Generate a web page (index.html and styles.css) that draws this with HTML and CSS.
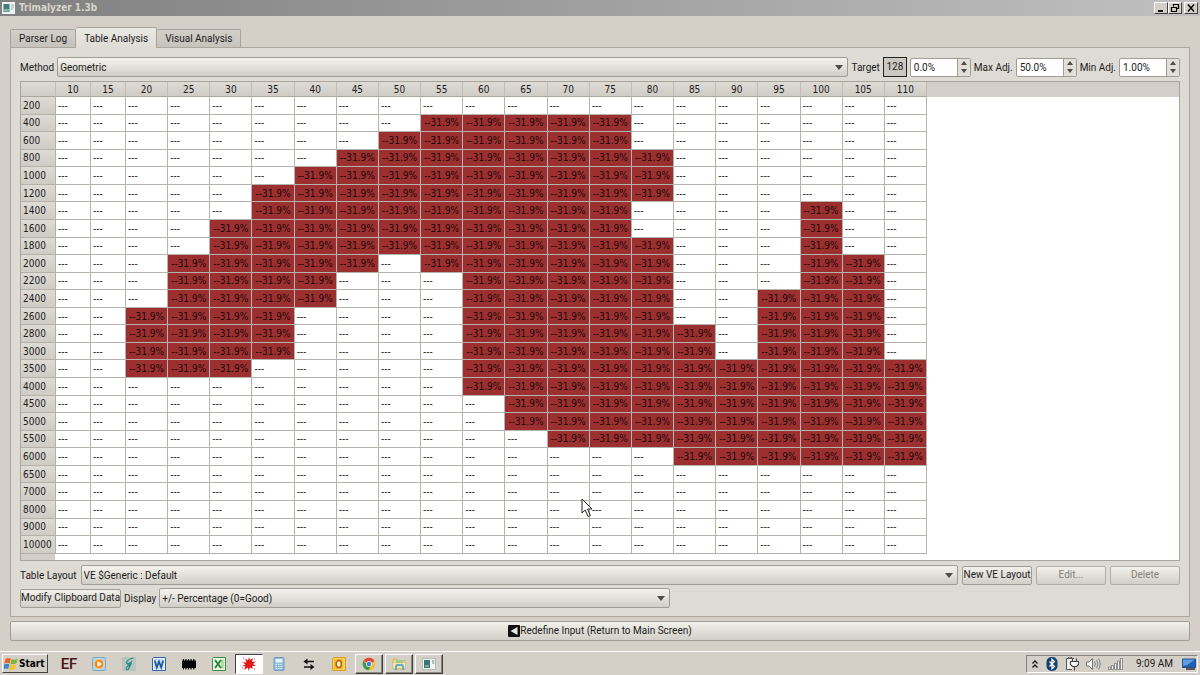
FILE: index.html
```html
<!DOCTYPE html>
<html lang="en">
<head>
<meta charset="utf-8">
<title>Trimalyzer 1.3b</title>
<link rel="stylesheet" href="styles.css">
</head>
<body>
<div class="screen">
  <header class="titlebar">
    <svg class="app-icon" viewBox="0 0 13 12" width="13" height="12"><rect width="13" height="12" fill="#eef2f0"/><rect x="1.500" y="2" width="6" height="8" fill="#3f7f7a"/><rect x="2" y="7" width="5" height="2.500" fill="#8db8a6"/><path d="M9 3h3M9 5h3M9 7h2" stroke="#9ab0a8"/></svg>
    <h1 class="title">Trimalyzer 1.3b</h1>
    <div class="window-buttons">
      <button class="win-btn" aria-label="Minimize"><svg viewBox="0 0 12 10" width="12" height="10"><path d="M3 8h5" stroke="#000" stroke-width="1.800"/></svg></button>
      <button class="win-btn" aria-label="Restore"><svg viewBox="0 0 12 10" width="12" height="10"><path d="M4.500 3.500V1.500h5v4H8M4.500 1.500h5M2.500 4.500h5v4h-5z" fill="none" stroke="#000" stroke-width="1.200"/></svg></button>
      <button class="win-btn close" aria-label="Close"><svg viewBox="0 0 12 10" width="12" height="10"><path d="M3 1.500l6 7M9 1.500l-6 7" stroke="#000" stroke-width="1.500"/></svg></button>
    </div>
  </header>

  <main class="content">
    <div class="tabs" role="tablist">
      <button class="tab" role="tab" aria-selected="false">Parser Log</button>
      <button class="tab active" role="tab" aria-selected="true">Table Analysis</button>
      <button class="tab" role="tab" aria-selected="false">Visual Analysis</button>
    </div>

    <section class="pane" role="tabpanel" aria-label="Table Analysis">
      <div class="row tight">
        <label for="method">Method</label>
        <div class="combo grow">
          <select id="method"><option>Geometric</option></select>
          <svg class="arrow" viewBox="0 0 8 5" width="8" height="5"><path d="M0 0h8L4 5z"/></svg>
        </div>
        <label for="target">Target</label>
        <button class="target-box">128</button>
        <div class="spin">
          <input id="target" type="text" value="0.0%">
          <div class="steps">
            <button class="step" aria-label="Increase target"><svg viewBox="0 0 6 4" width="6" height="4"><path d="M0 4h6L3 0z"/></svg></button>
            <button class="step" aria-label="Decrease target"><svg viewBox="0 0 6 4" width="6" height="4"><path d="M0 0h6L3 4z"/></svg></button>
          </div>
        </div>
        <label for="maxadj">Max Adj.</label>
        <div class="spin">
          <input id="maxadj" type="text" value="50.0%">
          <div class="steps">
            <button class="step" aria-label="Increase maximum"><svg viewBox="0 0 6 4" width="6" height="4"><path d="M0 4h6L3 0z"/></svg></button>
            <button class="step" aria-label="Decrease maximum"><svg viewBox="0 0 6 4" width="6" height="4"><path d="M0 0h6L3 4z"/></svg></button>
          </div>
        </div>
        <label for="minadj">Min Adj.</label>
        <div class="spin">
          <input id="minadj" type="text" value="1.00%">
          <div class="steps">
            <button class="step" aria-label="Increase minimum"><svg viewBox="0 0 6 4" width="6" height="4"><path d="M0 4h6L3 0z"/></svg></button>
            <button class="step" aria-label="Decrease minimum"><svg viewBox="0 0 6 4" width="6" height="4"><path d="M0 0h6L3 4z"/></svg></button>
          </div>
        </div>
      </div>

      <div class="grid-view">
        <table class="grid">
          <colgroup><col class="narrow"><col class="narrow"><col class="narrow"></colgroup>
          <thead><tr id="grid-head"></tr></thead>
          <tbody id="grid-body"></tbody>
        </table>
      </div>

      <div class="row">
        <label for="layout">Table Layout</label>
        <div class="combo grow">
          <select id="layout"><option>VE $Generic : Default</option></select>
          <svg class="arrow" viewBox="0 0 8 5" width="8" height="5"><path d="M0 0h8L4 5z"/></svg>
        </div>
        <button class="btn">New VE Layout</button>
        <button class="btn" disabled>Edit...</button>
        <button class="btn" disabled>Delete</button>
      </div>
      <div class="row tight">
        <button class="btn wide">Modify Clipboard Data</button>
        <label for="display">Display</label>
        <div class="combo display">
          <select id="display"><option>+/- Percentage (0=Good)</option></select>
          <svg class="arrow" viewBox="0 0 8 5" width="8" height="5"><path d="M0 0h8L4 5z"/></svg>
        </div>
      </div>
    </section>

    <button class="btn redefine">
      <svg viewBox="0 0 12 12" width="12" height="12"><rect width="12" height="12" rx="1" fill="#111"/><path d="M9.500 2v8L2.500 6z" fill="#e8e8e4"/></svg>
      Redefine Input (Return to Main Screen)
    </button>
  </main>

  <footer class="taskbar">
    <button class="start">
      <svg viewBox="0 0 14 14" width="14" height="14"><path d="M1.500 2C3.500.5 5 1 6.700 1.800L5.600 6.400C4 5.600 2.500 5.600.3 6.600z" fill="#e8622a"/><path d="M7.500 2.100C9.500 3 11.500 2.800 13.800 1.700L12.500 6.300C10.500 7.300 8.500 7.400 6.400 6.600z" fill="#7db83a"/><path d="M0 7.500C2.300 6.500 3.800 6.600 5.400 7.300L4.200 12C2.800 11.300 1.200 11.300 0 12z" fill="#3f86d0"/><path d="M6.200 7.600C8.200 8.400 10.200 8.300 12.200 7.400L11 12C9 13.100 7 13 4.900 12.300z" fill="#f4c22c"/></svg>
      Start
    </button>
    <nav class="launch" aria-label="Applications">
      <button class="task ef" aria-label="EF">EF</button>
      <button class="task" aria-label="Media Player"><svg viewBox="0 0 14 14"><rect x=".5" y=".5" width="13" height="13" rx="1" fill="#a9d0ea" stroke="#78aacb"/><circle cx="7" cy="7" r="5" fill="#f18a1f" stroke="#fff0d0" stroke-width=".7"/><path d="M5.500 4.200v5.600L10 7z" fill="#fff"/></svg></button>
      <button class="task" aria-label="Feather"><svg viewBox="0 0 14 14"><rect width="14" height="14" fill="#b8c4c0"/><path d="M11.500 1C7 2 4.500 4 4.500 6c1.500 1 4 .5 5.500-2M5 8c2 0 3.500-.5 4.500-2L6.500 12C5 13.500 3.500 12.500 4.500 10.500c1-1.500 3-1.500 4-2" fill="none" stroke="#258c86" stroke-width="1.200"/></svg></button>
      <button class="task" aria-label="Word"><svg viewBox="0 0 14 14"><path d="M1.500.5H13.500v13H.5v-12z" fill="#e6f0fb" stroke="#2d66ad"/><path d="M2 2h9v10H2z" fill="#cadff5"/><path d="M2.800 3.500L4.800 10.500 7 4.500 9.200 10.500 11.200 3.500" fill="none" stroke="#1d559f" stroke-width="1.700"/></svg></button>
      <button class="task" aria-label="Chip"><svg viewBox="0 0 14 14"><rect y="3.500" width="14" height="7.500" fill="#050505"/><path d="M1.500 2v10.500M4 2v10.500M6.500 2v10.500M9 2v10.500M11.800 2v10.500" stroke="#050505" stroke-width="1.200"/></svg></button>
      <button class="task" aria-label="Excel"><svg viewBox="0 0 14 14"><path d="M1.500.5H13.500v13H.5v-12z" fill="#eaf6e6" stroke="#3c8d3f"/><path d="M9 2.500h3v9H9" fill="#b7dbac"/><path d="M3 3l6 8M9 3l-6 8" stroke="#2d8436" stroke-width="2"/></svg></button>
      <button class="task pressed" aria-label="Trimalyzer"><svg viewBox="0 0 14 14"><path d="M7 0l1 3 3-2-1 4 4-.5-3 2.500 3 2-4 0 1 3-3-1.500L6.500 14 6 10.500 2 13l1.500-3.500L0 9l3.500-1.500L.5 5l4 .5L3 1.500l3 2z" fill="#e31515"/><path d="M1 1h1M0 11h1M12 12h1M12 2h1" stroke="#e33"/></svg></button>
      <button class="task" aria-label="Calculator"><svg viewBox="0 0 14 14"><rect x="2" y=".5" width="10" height="13" rx="1" fill="#8fbcdc" stroke="#6f9dbf"/><rect x="3.500" y="2" width="7" height="3.500" fill="#e5f5fc"/><path d="M3.500 7.500h7M3.500 9.500h7M3.500 11.500h7" stroke="#dcecf6" stroke-dasharray="1.500 1"/></svg></button>
      <button class="task" aria-label="Transfer"><svg viewBox="0 0 14 14"><path d="M3 4.500h9M2 10h9" stroke="#111" stroke-width="1.400"/><path d="M5.500 1.500v6L1.500 4.500zM8.500 7v6L12.500 10z" fill="#111"/></svg></button>
      <button class="task" aria-label="Outlook"><svg viewBox="0 0 14 14"><path d="M1.500.5H13.500v13H.5v-12z" fill="#f8d36a" stroke="#d99b20"/><path d="M2 2h9v10H2z" fill="#f3b936"/><ellipse cx="6.800" cy="7" rx="2.600" ry="3.400" fill="#fff2c4" stroke="#a96708" stroke-width="1.500"/></svg></button>
      <button class="task raised" aria-label="Chrome"><svg viewBox="0 0 14 14"><circle cx="7" cy="7" r="6.300" fill="#f0c22c"/><path d="M7 7L1.500 3.800A6.300 6.300 0 0 1 12.500 4z" fill="#dc4537"/><path d="M1.500 3.800A6.300 6.300 0 0 0 6.500 13.300L9 8.500 5 8z" fill="#3d9c50"/><circle cx="7" cy="7" r="2.900" fill="#eee"/><circle cx="7" cy="7" r="2.200" fill="#3e7fe0"/></svg></button>
      <button class="task raised" aria-label="Explorer"><svg viewBox="0 0 14 14"><path d="M1 2h4l1 1.500h7V12H1z" fill="#ecd680" stroke="#c0aa55" stroke-width=".7"/><path d="M4 3h7v3H4z" fill="#9ccf8e"/><path d="M1 6h12v5H1z" fill="#f5e7a0"/><path d="M4 13V9.500q0-1.500 1.500-1.500h4Q11 8 11 9.500V13" fill="none" stroke="#5da6d6" stroke-width="1.800"/></svg></button>
      <button class="task raised" aria-label="Trimalyzer window"><svg viewBox="0 0 14 14"><rect x=".5" y="1.500" width="13" height="11" fill="#f2f5f3" stroke="#b4bcb8"/><rect x="2" y="3" width="6" height="8" fill="#3b7472"/><rect x="3" y="8" width="4" height="2" fill="#82ad9d"/><path d="M10 4h2.500M10 6h2.500" stroke="#78938b"/></svg></button>
    </nav>
    <div class="tray">
      <svg viewBox="0 0 8 12" width="8" height="12"><path d="M1.500 5.500L4 3l2.500 2.500M1.500 9.500L4 7l2.500 2.500" fill="none" stroke="#111" stroke-width="1.300"/></svg>
      <svg viewBox="0 0 12 14" width="12" height="14"><rect x=".5" width="11" height="14" rx="5" fill="#133f75"/><path d="M3.500 4.500l5 5L6 11.800V2.200l2.500 2.300-5 5" fill="none" stroke="#fff" stroke-width="1.200"/></svg>
      <svg viewBox="0 0 14 14" width="14" height="14"><path d="M7 12.500H1.500v-11H9" fill="#eee" stroke="#555"/><path d="M3.500 1V0h3v1" fill="none" stroke="#555"/><path d="M5.500 4.500h8v3l-2 2H7.500l-2-2zM7.500 4.500v-3M11.500 4.500v-3M9.500 9.500v4" fill="#f6f6f4" stroke="#444" stroke-width="1.100"/></svg>
      <svg viewBox="0 0 15 14" width="15" height="14"><path d="M.5 5H3L6.500 1.500v11L3 9H.5z" fill="#f4f4f2" stroke="#777"/><path d="M8.500 4.500q2 2.500 0 5M10.500 3q3 4 0 8M12.500 1.500q3.500 5.500 0 11" fill="none" stroke="#888"/></svg>
      <svg viewBox="0 0 15 14" width="15" height="14"><path d="M.5 10h2v2.500h-2zM3.500 8.500h2v4h-2zM6.500 6.500h2v6h-2zM9.500 4h2v8.500h-2zM12.500 1.500h2v11h-2z" fill="#f4f4f2" stroke="#777" stroke-width=".8"/></svg>
      <time class="clock">9:09 AM</time>
      <svg viewBox="0 0 14 14" width="14" height="14"><path d="M.5 2h13v8.500H.5z" fill="#1f5fbd" stroke="#17396d" stroke-width=".8"/><path d="M1 2.500h12L5 8l-4 1z" fill="#5da0e4"/><path d="M4 12h9" stroke="#333" stroke-width="1.500"/></svg>
    </div>
  </footer>

  <svg class="cursor" viewBox="0 0 12 20" width="12" height="20"><path d="M1 1v14l3.200-3 2.800 6.500 2.300-1L6.600 11H11z" fill="#fff" stroke="#222"/></svg>
</div>
<script src="script.js"></script>
</body>
</html>
```
FILE: styles.css
```css
* { box-sizing: border-box; }

body {
  margin: 0;
  background: #d4d0c8;
  color: #1c1c1c;
  font-family: Roboto, "DejaVu Sans Condensed", sans-serif;
  font-size: 10px;
  line-height: 12px;
}

button, input, select {
  font: inherit;
  color: inherit;
  margin: 0;
  padding: 0;
}

svg { display: block; flex: none; }

.screen {
  position: relative;
  display: flex;
  flex-direction: column;
  min-height: 100vh;
}

.titlebar {
  display: flex;
  align-items: center;
  gap: 4px;
  height: 16px;
  padding: 0 2px;
  background: linear-gradient(90deg, #808080, #c0c0c0);
}

.title {
  flex: 1;
  margin: 0;
  color: #d8d5ce;
  font-family: "DejaVu Sans Condensed", "DejaVu Sans", sans-serif;
  font-size: 10px;
  font-weight: bold;
}

.window-buttons { display: flex; }

.win-btn {
  display: grid;
  place-items: center;
  width: 14px;
  height: 12px;
  background: #d4d0c8;
  border: 1px solid;
  border-color: #fff #404040 #404040 #fff;
}

.win-btn.close { margin-left: 2px; }

.content {
  flex: 1;
  display: flex;
  flex-direction: column;
  padding: 11px 10px 10px;
}

.tabs {
  display: flex;
  align-items: flex-end;
}

.tab {
  height: 18px;
  padding: 1px 8px 0;
  background: linear-gradient(#d2cfc8, #c6c3bc);
  border: 1px solid #a5a29a;
  border-bottom: 0;
  border-radius: 2px 2px 0 0;
}

.tab + .tab { border-left: 0; }

.tab.active {
  position: relative;
  height: 21px;
  margin-bottom: -1px;
  background: linear-gradient(#ebe9e3, #dfdcd6);
}

.pane {
  flex: 1;
  display: flex;
  flex-direction: column;
  gap: 3px;
  padding: 9px 9px 8px;
  background: #dedbd5;
  border: 1px solid #aaa79f;
}

.row {
  display: flex;
  align-items: center;
  gap: 4px;
}

.row.tight { gap: 3px; }

.row label { padding-top: 1px; }

.grow { flex: 1; }

.combo {
  display: grid;
  align-items: center;
}

.combo select {
  grid-area: 1 / 1;
  appearance: none;
  width: 100%;
  height: 20px;
  padding: 1px 20px 0 2px;
  background: linear-gradient(#f4f2ec, #e3e1da 50%, #d0cdc7);
  border: 1px solid #a09d95;
  border-radius: 2px;
}

.arrow {
  grid-area: 1 / 1;
  justify-self: end;
  margin-right: 5px;
  fill: #4e4c47;
  pointer-events: none;
}

.target-box {
  width: 24px;
  height: 20px;
  background: #cbc8c1;
  border: 1px solid #222;
}

.spin {
  display: flex;
  width: 61px;
  height: 19px;
  background: #fff;
  border: 1px solid #a09d95;
  border-radius: 2px;
}

.spin input {
  flex: 1;
  min-width: 0;
  padding: 1px 0 0 3px;
  background: none;
  border: 0;
}

.steps {
  display: flex;
  flex-direction: column;
  width: 13px;
  background: #e2dfd9;
  border-left: 1px solid #a09d95;
}

.step {
  flex: 1;
  display: grid;
  place-items: center;
  background: none;
  border: 0;
  fill: #4e4c47;
}

.grid-view {
  flex: 1;
  margin: 1px 0;
  background: linear-gradient(#d3cec7, #d3cec7) top / 100% 15px no-repeat, linear-gradient(#d3cec7, #d3cec7) left / 34px 100% no-repeat, #fff;
  border: 1px solid #a8a59d;
}

.grid {
  width: 906px;
  height: 472px;
  table-layout: fixed;
  border-collapse: separate;
  border-spacing: 0;
  font-family: "DejaVu Sans Condensed", "DejaVu Sans", sans-serif;
}

.narrow { width: 35px; }

.grid th, .grid td {
  padding: 1px 0 0;
  font-weight: normal;
  line-height: 12px;
  white-space: nowrap;
}

.grid thead th, .grid .corner {
  height: 15px;
  background: linear-gradient(#dedbd5, #cfccc5);
  border-right: 1px solid #c0bdb6;
  border-bottom: 1px solid #aaa79f;
}

.grid tbody th {
  padding-left: 2px;
  text-align: left;
  background: linear-gradient(#dedbd5, #cfccc5);
  border-right: 1px solid #b4b1aa;
  border-bottom: 1px solid #b4b1aa;
}

.grid tbody td {
  padding-left: 2px;
  background: #fff;
  border-right: 1px solid #b5b3ae;
  border-bottom: 1px solid #b5b3ae;
}

.grid tbody .hit {
  padding-left: 3px;
  background: #9c3030;
  color: #1d0707;
}

.btn {
  width: 70px;
  height: 19px;
  white-space: nowrap;
  background: linear-gradient(#f2f0ea, #e1dfd8 50%, #d2cfc9);
  border: 1px solid #a09d95;
  border-radius: 2px;
}

.btn:disabled { color: #85827b; border-color: #b1aea6; }

.btn.wide { width: 101px; }

.display { width: 511px; }

.btn.redefine {
  display: flex;
  align-items: center;
  justify-content: center;
  width: 100%;
  height: 20px;
  margin-top: 4px;
}

.taskbar {
  display: flex;
  align-items: center;
  height: 24px;
  padding: 0 2px;
  border-top: 1px solid #fff;
}

.start {
  display: flex;
  align-items: center;
  gap: 1px;
  width: 46px;
  height: 19px;
  padding-left: 1px;
  color: #000;
  font-family: "DejaVu Sans Condensed", "DejaVu Sans", sans-serif;
  font-weight: bold;
  background: #d4d0c8;
  border: 1px solid;
  border-color: #fff #404040 #404040 #fff;
}

.launch {
  flex: 1;
  display: flex;
  gap: 2px;
  margin-left: 7px;
}

.task {
  display: grid;
  place-items: center;
  width: 28px;
  height: 20px;
  background: none;
  border: 1px solid transparent;
}

.task svg { width: 14px; height: 14px; }

.ef {
  color: #4b1116;
  font-family: Roboto, sans-serif;
  font-size: 15px;
  font-weight: 500;
  line-height: 16px;
}

.pressed {
  background: #fff;
  border-color: #404040 #fff #fff #404040;
}

.raised {
  border-color: #fff #404040 #404040 #fff;
  box-shadow: inset -1px -1px #8a8780;
}

.tray {
  display: flex;
  align-items: center;
  gap: 7px;
  height: 18px;
  padding: 0 1px 0 4px;
  border: 1px solid;
  border-color: #85827b #fff #fff #85827b;
}

.clock { margin: 0 2px 0 6px; }

.cursor {
  position: absolute;
  left: 581px;
  top: 498px;
}
```
FILE: script.js
```js
const loads = [10, 15, 20, 25, 30, 35, 40, 45, 50, 55, 60, 65, 70, 75, 80, 85, 90, 95, 100, 105, 110];

// Each row: engine speed, then [from, to] load ranges that hold a correction.
const rows = [
  [200],
  [400, [55, 75]],
  [600, [50, 75]],
  [800, [45, 80]],
  [1000, [40, 80]],
  [1200, [35, 80]],
  [1400, [35, 75], [100, 100]],
  [1600, [30, 75], [100, 100]],
  [1800, [30, 80], [100, 100]],
  [2000, [25, 45], [55, 80], [100, 105]],
  [2200, [25, 40], [60, 80], [100, 105]],
  [2400, [25, 40], [60, 80], [95, 105]],
  [2600, [20, 35], [60, 80], [95, 105]],
  [2800, [20, 35], [60, 85], [95, 105]],
  [3000, [20, 35], [60, 85], [95, 105]],
  [3500, [20, 30], [60, 110]],
  [4000, [60, 110]],
  [4500, [65, 110]],
  [5000, [65, 110]],
  [5500, [70, 110]],
  [6000, [85, 110]],
  [6500], [7000], [8000], [9000], [10000]
];

function cell(tag, text, scope) {
  const el = document.createElement(tag);
  el.textContent = text;
  if (scope) el.scope = scope;
  return el;
}

const head = document.getElementById("grid-head");
head.append(cell("td", ""));
head.firstChild.className = "corner";
loads.forEach(load => head.append(cell("th", load, "col")));

const body = document.getElementById("grid-body");
rows.forEach(([rpm, ...ranges]) => {
  const tr = document.createElement("tr");
  tr.append(cell("th", rpm, "row"));
  loads.forEach(load => {
    const hit = ranges.some(([from, to]) => load >= from && load <= to);
    const td = cell("td", hit ? "--31.9%" : "---");
    if (hit) td.className = "hit";
    tr.append(td);
  });
  body.append(tr);
});
```
